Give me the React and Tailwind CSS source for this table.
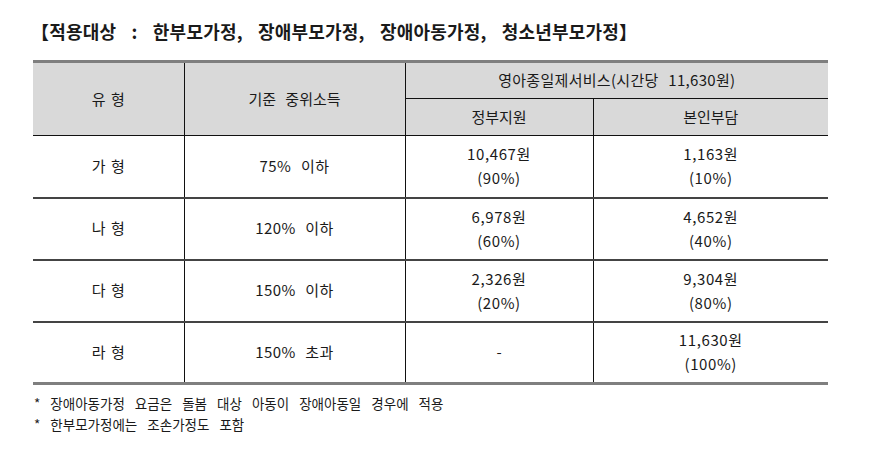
import React from "react";

const rows = [
  { type: "가 형", income: "75% 이하", gov: ["10,467원", "(90%)"], self: ["1,163원", "(10%)"] },
  { type: "나 형", income: "120% 이하", gov: ["6,978원", "(60%)"], self: ["4,652원", "(40%)"] },
  { type: "다 형", income: "150% 이하", gov: ["2,326원", "(20%)"], self: ["9,304원", "(80%)"] },
  { type: "라 형", income: "150% 초과", gov: null, self: ["11,630원", "(100%)"] },
];

function Amount({ value }) {
  if (!value) return <span>-</span>;
  return (
    <div className="leading-[24px] tracking-[0.6px]">
      <div>{value[0]}</div>
      <div>{value[1]}</div>
    </div>
  );
}

export default function App() {
  return (
    <div
      className="w-[874px] h-[453px] bg-white text-[#1a1a1a] pt-[19px]"
      style={{ fontFamily: '"Noto Sans CJK KR", "Noto Sans", sans-serif' }}
    >
      <h1 className="ml-[31px] text-[18px] leading-[24px] font-bold [word-spacing:11px] tracking-[0.2px]">
        【적용대상 : 한부모가정, 장애부모가정, 장애아동가정, 청소년부모가정】
      </h1>

      <table className="ml-[33px] mt-[17px] w-[795px] table-fixed border-collapse text-[15px] text-center [word-spacing:6px]">
        <colgroup>
          <col className="w-[151px]" />
          <col className="w-[221px]" />
          <col className="w-[188px]" />
          <col className="w-[235px]" />
        </colgroup>
        <thead className="bg-[#d9d9d9]">
          <tr className="h-[37px] border-t-[3px] border-[#7f7f7f]">
            <th rowSpan={2} className="font-normal border-r border-[#111] border-b border-b-[#111] [word-spacing:2px]">유 형</th>
            <th rowSpan={2} className="font-normal border-r border-[#111] border-b border-b-[#111]">기준 중위소득</th>
            <th colSpan={2} className="font-normal border-b border-[#111] tracking-[0.3px]">영아종일제서비스(시간당 11,630원)</th>
          </tr>
          <tr className="h-[37px]">
            <th className="font-normal border-r border-[#111] border-b border-b-[#111]">정부지원</th>
            <th className="font-normal border-b border-[#111]">본인부담</th>
          </tr>
        </thead>
        <tbody>
          {rows.map((r, i) => (
            <tr
              key={r.type}
              className={
                i === rows.length - 1
                  ? "h-[62px] border-b-[3px] border-[#7f7f7f]"
                  : "h-[62px] border-b-2 border-[#444]"
              }
            >
              <td className="border-r border-[#111] [word-spacing:2px]">{r.type}</td>
              <td className="border-r border-[#111] tracking-[0.4px]">{r.income}</td>
              <td className="border-r border-[#111]">
                <Amount value={r.gov} />
              </td>
              <td>
                <Amount value={r.self} />
              </td>
            </tr>
          ))}
        </tbody>
      </table>

      <div className="ml-[34px] mt-[8px] text-[13.5px] leading-[21px] [word-spacing:7px]">
        <p>* 장애아동가정 요금은 돌봄 대상 아동이 장애아동일 경우에 적용</p>
        <p>* 한부모가정에는 조손가정도 포함</p>
      </div>
    </div>
  );
}
